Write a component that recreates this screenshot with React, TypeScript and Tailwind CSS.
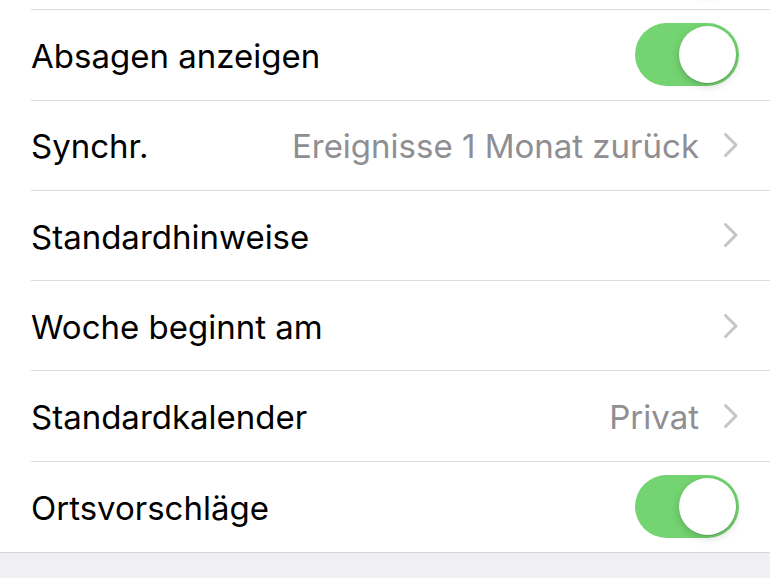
import type { ReactNode } from "react";

type Row = {
  label: string;
  value?: string;
  toggle?: boolean;
  chevron?: boolean;
};

// first row is only peeking in at the top (its toggle shadow), so no label
const ROWS: Row[] = [
  { label: "", toggle: true },
  { label: "Absagen anzeigen", toggle: true },
  { label: "Synchr.", value: "Ereignisse 1 Monat zurück", chevron: true },
  { label: "Standardhinweise", chevron: true },
  { label: "Woche beginnt am", chevron: true },
  { label: "Standardkalender", value: "Privat", chevron: true },
  { label: "Ortsvorschläge", toggle: true },
];

function Toggle() {
  return (
    <div className="w-[104px] h-[63px] rounded-full bg-[#74d471] flex items-center justify-end pr-[3px]">
      <div className="w-[57px] h-[57px] rounded-full bg-white shadow-[0_3px_8px_rgba(0,0,0,0.18),0_1px_1px_rgba(0,0,0,0.12)]" />
    </div>
  );
}

function Chevron() {
  return (
    <svg width="16" height="26" viewBox="0 0 16 26" fill="none">
      <path d="M2.5 2.5 L13 13 L2.5 23.5" stroke="#c5c5ca" strokeWidth="3" strokeLinecap="round" strokeLinejoin="round" />
    </svg>
  );
}

function SettingsRow({ row, last }: { row: Row; last: boolean }) {
  let accessory: ReactNode = null;
  if (row.toggle) accessory = <Toggle />;
  else if (row.chevron) accessory = <Chevron />;

  return (
    <div className="pl-[31px] bg-white">
      <div
        className={`h-[90.25px] flex items-center justify-between pr-[31px] ${
          last ? "" : "border-b-[1.5px] border-[#dcdce0]"
        }`}
      >
        <span className="block pt-[4px] text-[33px] text-black">{row.label}</span>
        <div className="flex items-center gap-[24px]">
          {row.value && <span className="block pt-[4px] text-[33px] text-[#8e8e93]">{row.value}</span>}
          {accessory}
        </div>
      </div>
    </div>
  );
}

export default function App() {
  return (
    <div
      className="w-[770px] h-[578px] overflow-hidden bg-[#efeff4]"
      style={{ fontFamily: "Inter, 'Noto Sans', sans-serif" }}
    >
      <div className="-mt-[80px] bg-white border-b-[1.5px] border-[#d6d6da]">
        {ROWS.map((row, i) => (
          <SettingsRow key={i} row={row} last={i === ROWS.length - 1} />
        ))}
      </div>
    </div>
  );
}
